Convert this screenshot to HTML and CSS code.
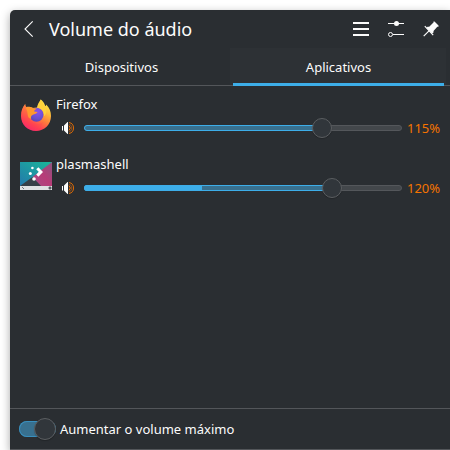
FILE: index.html
```html
<!DOCTYPE html>
<html lang="pt-BR">
<head>
<meta charset="utf-8">
<title>Volume do áudio</title>
<link rel="stylesheet" href="styles.css">
</head>
<body>
<svg width="0" height="0" class="defs">
  <defs>
    <linearGradient id="fox" x1="0.8" y1="0" x2="0.25" y2="1">
      <stop offset="0" stop-color="#fff04a"/><stop offset=".3" stop-color="#ffbd3a"/><stop offset=".55" stop-color="#ff7a3c"/><stop offset=".8" stop-color="#ff3b55"/><stop offset="1" stop-color="#ee1b7c"/>
    </linearGradient>
    <radialGradient id="globe" cx=".6" cy=".3" r=".8">
      <stop offset="0" stop-color="#8a50ee"/><stop offset=".6" stop-color="#6850d0"/><stop offset="1" stop-color="#5a3fb0"/>
    </radialGradient>
    <linearGradient id="teal" x1="0" y1="1" x2="1" y2="0">
      <stop offset="0" stop-color="#2478ac"/><stop offset="1" stop-color="#18b898"/>
    </linearGradient>
    <linearGradient id="rose" x1="0" y1="1" x2="1" y2="0">
      <stop offset="0" stop-color="#a84c84"/><stop offset=".5" stop-color="#b83c78"/><stop offset="1" stop-color="#8b5580"/>
    </linearGradient>
    <symbol id="speaker" viewBox="0 0 14 14">
      <path d="M1 5h1v4.500H1zM3 4.500 6.500 1H7v12h-.5L3 9.500z" fill="#fcfcfc"/>
      <path d="M8 4.500q2.500 2.500 0 5" fill="none" stroke="#f67400"/>
      <path d="M8 1.500q4.500.8 4.500 5.500T8 12.500" fill="none" stroke="#e06c04"/>
      <path d="M8 3q2.800 1 2.800 4T8 11" fill="none" stroke="#a95a1c" stroke-width=".7"/>
    </symbol>
  </defs>
</svg>
<main class="popup">
  <header class="header">
    <svg class="back" width="10" height="18" viewBox="0 0 10 18"><path d="M8.700 1.300 1 9l7.700 7.700" fill="none" stroke="#fcfcfc" stroke-width="1.100"/></svg>
    <h1>Volume do áudio</h1>
    <div class="actions">
      <svg width="16" height="16" viewBox="0 0 16 16"><path d="M0 2h16M0 8h16M0 14h16" stroke="#fcfcfc" stroke-width="2"/></svg>
      <svg width="16" height="16" viewBox="0 0 16 16"><path d="M0 2.500h16M5 13.500h11" stroke="#fcfcfc"/><circle cx="8.500" cy="2.500" r="2.500" fill="#fcfcfc"/><circle cx="2.500" cy="13.500" r="2" fill="none" stroke="#fcfcfc"/></svg>
      <svg width="16" height="16" viewBox="0 0 16 16"><path d="M10.500.5h1l4 4v1.200h-1.200L10.500 10v1.500L9 12.500 3.500 7l1-1.200h1.700l4.300-4.200z" fill="#fcfcfc"/><path d="M1.800 5.200l8.400 8.900M6 9.800.7 15.200" fill="none" stroke="#fcfcfc" stroke-width="1.200"/></svg>
    </div>
  </header>
  <nav class="tabs">
    <div class="tab">Dispositivos</div>
    <div class="tab active">Aplicativos</div>
  </nav>
  <section class="streams">
    <article class="stream">
      <svg class="app" width="32" height="32" viewBox="0 0 32 32">
        <path d="M20.800.6c2 1.500 3.700 3.900 4.400 6.400.7-.2.900-.8.900-1.600 3.400 3.100 4.900 7 4.900 11.600 0 8.500-6.600 15-15 15S1 25.500 1 17C1 12.300 2.500 8.200 5.300 4.800c0 1.500.3 2.400 1 3.200 2.200-.7 4.200-.3 5.700 1L17.500 8.500C18 6 19.500 3 20.800.6z" fill="url(#fox)"/>
        <path d="M1.200 17C1 12.300 2.500 8.200 5.300 4.800c0 1.500.3 2.400 1 3.200l3 6-1 4c2 7 10 9 15 5-3 5-4 9-7 9-8 0-15.100-6.500-15.100-15z" fill="#ff4550" opacity=".3"/>
        <circle cx="16.500" cy="15.700" r="7" fill="url(#globe)"/>
        <path d="M5.600 9c2.500-1.500 6-1.500 8 .3 1.500-.2 2.800 0 3.600.5-2 .6-3 1.500-3 2.700l3.300.5c-.4 1.700-3 2-4.600 2.700-1.800.8-2.300 2.300-1.700 4.300-2.300-.7-3.300-2.300-3.500-4.300-.2-2.500-.6-4.700-2.100-6.700z" fill="#ff982e"/>
        <path d="M17 8.800c4.500.2 7.500 3.700 7 8.400 3-2.700 3.200-7 .6-10L20.800.6C19.500 3 17.500 5 17 8.800z" fill="#ffd23c"/>
      </svg>
      <div class="name">Firefox</div>
      <div class="control">
        <svg width="14" height="14"><use href="#speaker"/></svg>
        <div class="slider"><div class="fill" style="width:238px"></div><div class="knob" style="left:228px"></div></div>
        <div class="percent">115%</div>
      </div>
    </article>
    <article class="stream">
      <svg class="app" width="32" height="32" viewBox="0 0 32 32">
        <path d="M0 3h32v24H0z" fill="url(#teal)"/>
        <path d="M32 3v24H20L12.500 18z" fill="url(#rose)"/>
        <path d="M0 27 12.500 18 21 27z" fill="#374047"/>
        <path d="M0 27h32v4H0z" fill="#dfe1e2"/>
        <path d="m2 28 2 2M29 28h2v2h-2z" stroke="#555b60" fill="#555b60" stroke-width=".8"/>
        <path d="m17.300 9.200 3.600 3.700-3.600 3.700" fill="none" stroke="#fff" stroke-width="3"/>
        <circle cx="12.400" cy="9" r="1.300" fill="#fff"/><circle cx="10.300" cy="14.400" r="1.500" fill="#fff"/><circle cx="14" cy="20" r="1.800" fill="#fff"/>
      </svg>
      <div class="name">plasmashell</div>
      <div class="control">
        <svg width="14" height="14"><use href="#speaker"/></svg>
        <div class="slider"><div class="fill" style="width:248px"></div><div class="meter" style="width:118px"></div><div class="knob" style="left:238px"></div></div>
        <div class="percent">120%</div>
      </div>
    </article>
  </section>
  <footer class="footer">
    <div class="switch"><div class="thumb"></div></div>
    <span>Aumentar o volume máximo</span>
  </footer>
</main>
</body>
</html>
```
FILE: styles.css
```css
* { box-sizing: border-box; }
body {
  margin: 0;
  width: 450px;
  height: 450px;
  overflow: hidden;
  padding: 10px 0 0 10px;
  background: #fff;
  color: #fcfcfc;
  font: 13px/18px "Noto Sans", sans-serif;
}
.defs { position: absolute; }
svg { display: block; flex: none; }
.popup {
  width: 440px;
  height: 440px;
  display: flex;
  flex-direction: column;
  background: #2a2e32;
  border-bottom: 1px solid #53565a;
  border-top-left-radius: 5px;
  box-shadow: 0 3px 10px rgba(0, 0, 0, .35);
}
.header {
  height: 38px;
  display: flex;
  align-items: center;
  padding: 0 11px 0 14px;
}
h1 {
  margin: 0 0 0 15px;
  font-size: 18px;
  line-height: 26px;
  font-weight: 400;
}
.actions { margin-left: auto; display: flex; gap: 19px; }
.tabs {
  height: 38px;
  display: grid;
  grid-template-columns: 220px 216px;
  border-bottom: 1px solid #53565a;
}
.tab { text-align: center; padding: 10px 0 0 3px; height: 38px; }
.tab.active {
  padding-left: 1px;
  background:
    linear-gradient(#3daee9, #3daee9) 3px 100% / 211px 3px no-repeat,
    linear-gradient(#53565a, #53565a) 0 100% / 100% 1px no-repeat,
    #2d3135;
}
.streams { flex: 1; padding-top: 9px; }
.stream {
  height: 60px;
  display: grid;
  grid-template: 18px 30px / 32px 1fr;
  column-gap: 4px;
  padding-left: 10px;
}
.app { grid-row: 1 / 3; margin-top: 4px; }
.control { display: flex; align-items: center; padding-left: 5px; }
.slider {
  position: relative;
  width: 318px;
  height: 6px;
  margin-left: 9px;
  border-radius: 3px;
  border: 1px solid #54575b;
  background: #43474b;
}
.fill, .meter { position: absolute; left: -1px; top: -1px; height: 6px; border-radius: 3px 0 0 3px; }
.fill { background: #38708f; border: 1px solid #3daee9; }
.meter { background: #3daee9; }
.knob, .thumb {
  position: absolute;
  border: 1px solid #5b5e61;
  border-radius: 50%;
  background: #31363b;
  box-shadow: 0 1px 1px rgba(0, 0, 0, .2);
}
.knob { width: 20px; height: 20px; top: -8px; margin-left: -1px; }
.percent { margin-left: 5px; color: #f67400; }
.footer {
  height: 41px;
  display: flex;
  align-items: center;
  gap: 4px;
  padding-left: 9px;
  border-top: 1px solid #53565a;
}
.switch {
  position: relative;
  width: 37px;
  height: 16px;
  border-radius: 8px;
  background: #38708f;
  box-shadow: inset 0 0 0 1px #398fbe;
}
.thumb { width: 22px; height: 22px; right: 0; top: -3px; }
```
